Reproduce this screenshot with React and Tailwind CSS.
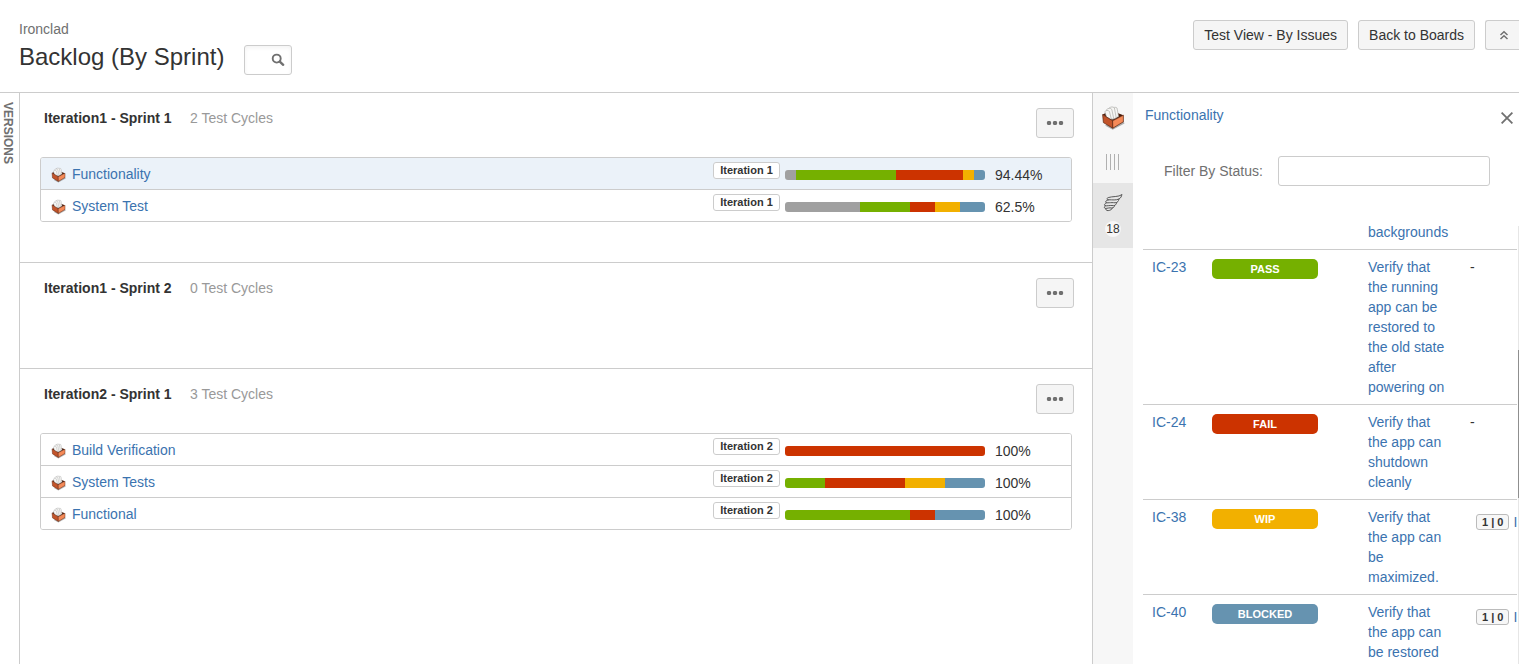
import React from "react";

const STATUS_COLORS = {
  unexecuted: "bg-[#a0a0a0]",
  pass: "bg-[#75b000]",
  fail: "bg-[#cc3300]",
  wip: "bg-[#f2b000]",
  blocked: "bg-[#6693b0]",
};

const SPRINTS = [
  {
    name: "Iteration1 - Sprint 1",
    count: "2 Test Cycles",
    cycles: [
      {
        name: "Functionality",
        version: "Iteration 1",
        percent: "94.44%",
        selected: true,
        parts: [["unexecuted", 1], ["pass", 9], ["fail", 6], ["wip", 1], ["blocked", 1]],
      },
      {
        name: "System Test",
        version: "Iteration 1",
        percent: "62.5%",
        parts: [["unexecuted", 3], ["pass", 2], ["fail", 1], ["wip", 1], ["blocked", 1]],
      },
    ],
  },
  { name: "Iteration1 - Sprint 2", count: "0 Test Cycles", cycles: [] },
  {
    name: "Iteration2 - Sprint 1",
    count: "3 Test Cycles",
    cycles: [
      { name: "Build Verification", version: "Iteration 2", percent: "100%", parts: [["fail", 1]] },
      {
        name: "System Tests",
        version: "Iteration 2",
        percent: "100%",
        parts: [["pass", 1], ["fail", 2], ["wip", 1], ["blocked", 1]],
      },
      {
        name: "Functional",
        version: "Iteration 2",
        percent: "100%",
        parts: [["pass", 5], ["fail", 1], ["blocked", 2]],
      },
    ],
  },
];

const TESTS = [
  { summary: "backgrounds" },
  {
    key: "IC-23",
    status: "pass",
    label: "PASS",
    summary: "Verify that the running app can be restored to the old state after powering on",
  },
  { key: "IC-24", status: "fail", label: "FAIL", summary: "Verify that the app can shutdown cleanly" },
  { key: "IC-38", status: "wip", label: "WIP", summary: "Verify that the app can be maximized.", defects: "1 | 0" },
  { key: "IC-40", status: "blocked", label: "BLOCKED", summary: "Verify that the app can be restored", defects: "1 | 0" },
];

function BoxIcon({ className }) {
  return (
    <svg viewBox="0 0 24 24" className={className} aria-hidden="true">
      <path d="M4 19.5 L11.7 23.8 L23.5 17.5 L22 14 Z" fill="#000" opacity=".3" />
      <path d="M1.6 8.6 L10 4.6 L22.4 9.2 L11.6 15 Z" fill="#4a1d0c" />
      <g fill="#f6f6f4" stroke="#a2a2a0" strokeWidth=".6">
        <path d="M11 2.5 C13 1.2 14.5 .8 16 2 L17.6 10.5 L13.5 12.5 Z" />
        <path d="M8 2.2 C10 .6 12 .4 13.4 2 L15.2 11.8 L11.5 13.2 Z" />
        <path d="M5.6 3.6 C7.4 2 9.4 1.8 10.8 3.4 L12.8 13 L9 13 Z" />
        <path d="M3.8 5.6 C5.2 4.2 7 4 8.4 5.4 L10.4 13.4 L5.6 11 Z" />
      </g>
      <path d="M1.6 8.6 L11.6 14.8 L11.8 22.2 L2.4 16.6 Z" fill="#c2542a" stroke="#5a210c" strokeWidth=".7" />
      <path d="M11.6 14.8 L22.4 9.2 L22.4 15.8 L11.8 22.2 Z" fill="#f58a58" stroke="#5a210c" strokeWidth=".7" />
    </svg>
  );
}

function FeatherIcon() {
  return (
    <svg viewBox="0 0 20 18" className="h-[18px] w-5" fill="none" stroke="#505050" strokeWidth=".95" strokeLinecap="round" strokeLinejoin="round" aria-hidden="true">
      <path d="M18.8 .8 C15.5 3.2 9 2.2 5.2 3.6 C3.2 4.6 3.6 5.8 5.8 5.8 C9.5 5.8 13 6.4 16 5 C17.8 4 18.6 2.4 18.8 .8" />
      <path d="M5.4 5.9 C3.4 6.3 2.2 7.4 2.8 8.4 C3.6 9.4 8 8.2 12 8.8 C14 9 15.6 7.4 16 5" />
      <path d="M3.4 8.8 C1.8 9.6 1 10.8 1.8 11.6 C3 12.4 7 11 10.4 11.6 C12.2 11.7 13.4 10.4 13.8 8.5" />
      <path d="M2.4 11.8 C1 12.8 1 14 2.2 14.4 C4 14.6 6.4 13.4 8.8 14 C10.4 14 11.4 13 11.6 11.5" />
      <path d="M2.8 14.5 C2.4 15.6 3.4 16.8 5.2 16.6 C7.4 16.4 9 15.4 9.4 14" />
    </svg>
  );
}

const buttonStyle = "rounded-[3px] border border-[#cccccc] bg-[#f5f5f5] text-[#333333]";

function Cycle({ cycle }) {
  return (
    <li className={`flex h-8 items-start border-b border-[#cccccc] px-[10px] last:h-[31px] last:border-b-0 ${cycle.selected ? "bg-[#ebf2f9]" : "bg-white"}`}>
      <BoxIcon className="mt-[9px] h-4 w-[15px]" />
      <a href="#cycle" className="mt-1.5 ml-1.5 flex-1 leading-5 text-[#3b73af]">{cycle.name}</a>
      <span className="mt-1 w-[67px] rounded-[3px] border border-[#cccccc] bg-white text-center text-[11px] leading-[15px] font-bold">
        {cycle.version}
      </span>
      <div className="mt-3 ml-[5px] flex h-[10px] w-[200px] overflow-hidden rounded-[3px]">
        {cycle.parts.map(([status, share]) => (
          <span key={status} className={STATUS_COLORS[status]} style={{ flexGrow: share }} />
        ))}
      </div>
      <span className="mt-[7px] ml-[10px] w-[66px] leading-5">{cycle.percent}</span>
    </li>
  );
}

function Sprint({ sprint }) {
  return (
    <section className="min-h-[106px] border-b border-[#cccccc] px-5 pt-[15px] pb-10 last:border-b-0">
      <header className="-mr-0.5 mb-[19px] ml-1 flex items-start">
        <h2 className="min-w-[134px] leading-5 font-bold">{sprint.name}</h2>
        <span className="ml-3 flex-1 leading-5 text-[#999999]">{sprint.count}</span>
        <button aria-label="Sprint actions" className={`flex h-[30px] w-[38px] items-center justify-center ${buttonStyle}`}>
          <svg viewBox="0 0 18 4" className="h-1 w-[18px]" fill="#707070" aria-hidden="true">
            <circle cx="3" cy="2" r="2.2" />
            <circle cx="9" cy="2" r="2.2" />
            <circle cx="15" cy="2" r="2.2" />
          </svg>
        </button>
      </header>
      {sprint.cycles.length > 0 && (
        <ul className="overflow-hidden rounded-[3px] border border-[#cccccc]">
          {sprint.cycles.map((cycle) => (
            <Cycle key={cycle.name} cycle={cycle} />
          ))}
        </ul>
      )}
    </section>
  );
}

function TestRow({ test }) {
  return (
    <tr className="border-b border-[#cccccc] align-top last:border-b-0">
      <td className="py-[7px] pl-[9px]">{test.key && <a href="#issue" className="text-[#3b73af]">{test.key}</a>}</td>
      <td className="py-[7px] pl-[9px]">
        {test.label && (
          <span className={`mt-0.5 block h-5 w-[106px] rounded-[5px] text-center text-[11px] leading-5 font-bold text-white ${STATUS_COLORS[test.status]}`}>
            {test.label}
          </span>
        )}
      </td>
      <td className="py-[7px] pl-[9px]">
        <a href="#issue" className="block w-[84px] text-[#3b73af]">{test.summary}</a>
      </td>
      <td className="py-[7px] whitespace-nowrap">
        {test.defects && (
          <span className="flex items-start gap-1 pt-[7px] pl-1.5">
            <span className="rounded-[3px] border border-[#bbbbbb] bg-[#f7f7f7] px-[5px] text-[11px] leading-[14px] font-bold">
              {test.defects}
            </span>
            <a href="#defect" className="leading-4 text-[#3b73af]">I</a>
          </span>
        )}
        {test.key && !test.defects && "-"}
      </td>
    </tr>
  );
}

export default function App() {
  return (
    <div className="flex h-screen flex-col overflow-hidden bg-white font-['Liberation_Sans',Arial,sans-serif] text-sm leading-5 text-[#333333]">
      <header className="flex shrink-0 items-start border-b border-[#cccccc] pt-5 pb-[17px]">
        <div className="flex-1 pl-[19px]">
          <p className="leading-[18px] text-[#707070]">Ironclad</p>
          <div className="flex items-start gap-5 pt-[7px]">
            <h1 className="text-2xl leading-6">Backlog (By Sprint)</h1>
            <label className="relative block">
              <input aria-label="Search" className="block h-[30px] w-12 rounded-[3px] border border-[#cccccc] pr-6 pl-1 shadow-inner" />
              <svg viewBox="0 0 14 14" className="absolute top-2 right-[7px] h-[14px] w-[14px]" fill="none" stroke="#707070" aria-hidden="true">
                <circle cx="5.7" cy="5.6" r="4" strokeWidth="1.9" />
                <path d="M8.8 8.6 L12.2 11.8" strokeWidth="2.4" strokeLinecap="round" />
              </svg>
            </label>
          </div>
        </div>
        <nav className="flex gap-[10px]">
          <button className={`h-[30px] px-[10px] ${buttonStyle}`}>Test View - By Issues</button>
          <button className={`h-[30px] px-[10px] ${buttonStyle}`}>Back to Boards</button>
          <button aria-label="Collapse header" className="flex h-[30px] w-[34px] items-center rounded-l-[3px] border border-r-0 border-[#cccccc] bg-[#f5f5f5] pl-[13px]">
            <svg viewBox="0 0 10 10" className="h-[10px] w-[10px]" fill="none" stroke="#707070" strokeWidth="1.5" aria-hidden="true">
              <path d="M1.5 5 L5 1.7 L8.5 5 M1.5 9 L5 5.7 L8.5 9" />
            </svg>
          </button>
        </nav>
      </header>

      <div className="flex min-h-0 flex-1">
        <aside className="w-5 shrink-0 border-r border-[#cccccc] pt-[9px]">
          <button className="block w-4 text-xs leading-4 font-bold text-[#707070] [writing-mode:vertical-rl]">VERSIONS</button>
        </aside>

        <main className="min-w-0 flex-1 overflow-hidden">
          {SPRINTS.map((sprint) => (
            <Sprint key={sprint.name} sprint={sprint} />
          ))}
        </main>

        <nav className="flex w-[41px] shrink-0 flex-col border-l border-[#cccccc] bg-[#f7f7f7]">
          <button aria-label="Test cycle" className="flex h-12 items-center justify-center pt-0.5">
            <BoxIcon className="h-6 w-6" />
          </button>
          <button aria-label="Details" className="flex h-[42px] items-center justify-center">
            <svg viewBox="0 0 14 16" className="h-4 w-[14px]" stroke="#b0b0b0" shapeRendering="crispEdges" aria-hidden="true">
              <path d="M.5 0V16M4.5 0V16M8.5 0V16M12.5 0V16" />
            </svg>
          </button>
          <button aria-label="Tests, 18" className="flex h-[65px] flex-col items-center gap-[9px] bg-[#e6e6e6] pt-[11px]">
            <FeatherIcon />
            <span className="h-4 w-4 rounded-full bg-[#f7f7f7] text-center text-xs leading-4"><span className="-mx-1">18</span></span>
          </button>
        </nav>

        <aside className="flex w-[386px] shrink-0 flex-col">
          <header className="flex items-start justify-between pt-3 pr-1.5 pl-3">
            <a href="#cycle" className="text-[#3b73af]">Functionality</a>
            <button aria-label="Close" className="mt-[7px]">
              <svg viewBox="0 0 12 12" className="h-3 w-3" stroke="#707070" strokeWidth="1.8" aria-hidden="true">
                <path d="M.6 .6 L11.4 11.4 M11.4 .6 L.6 11.4" />
              </svg>
            </button>
          </header>
          <div className="flex items-center gap-[15px] pt-[31px] pr-[29px] pb-9 pl-[31px]">
            <label htmlFor="status" className="whitespace-nowrap text-[#707070]">Filter By Status:</label>
            <input id="status" className="h-[30px] min-w-0 flex-1 rounded-[3px] border border-[#cccccc] px-2" />
          </div>
          <div className="flex min-h-0 flex-1 gap-px pl-[10px]">
            <div className="min-w-0 flex-1 overflow-hidden">
              <table className="-mt-[7px] w-full table-fixed border-collapse">
                <colgroup>
                  <col className="w-[60px]" />
                  <col className="w-[156px]" />
                  <col className="w-[111px]" />
                  <col />
                </colgroup>
                <tbody>
                  {TESTS.map((test) => (
                    <TestRow key={test.summary} test={test} />
                  ))}
                </tbody>
              </table>
            </div>
            <div className="mt-1 w-px bg-[#e6e6e6]">
              <div className="mt-[124px] h-[148px] bg-[#8f8f8f]" />
            </div>
          </div>
        </aside>
      </div>
    </div>
  );
}
